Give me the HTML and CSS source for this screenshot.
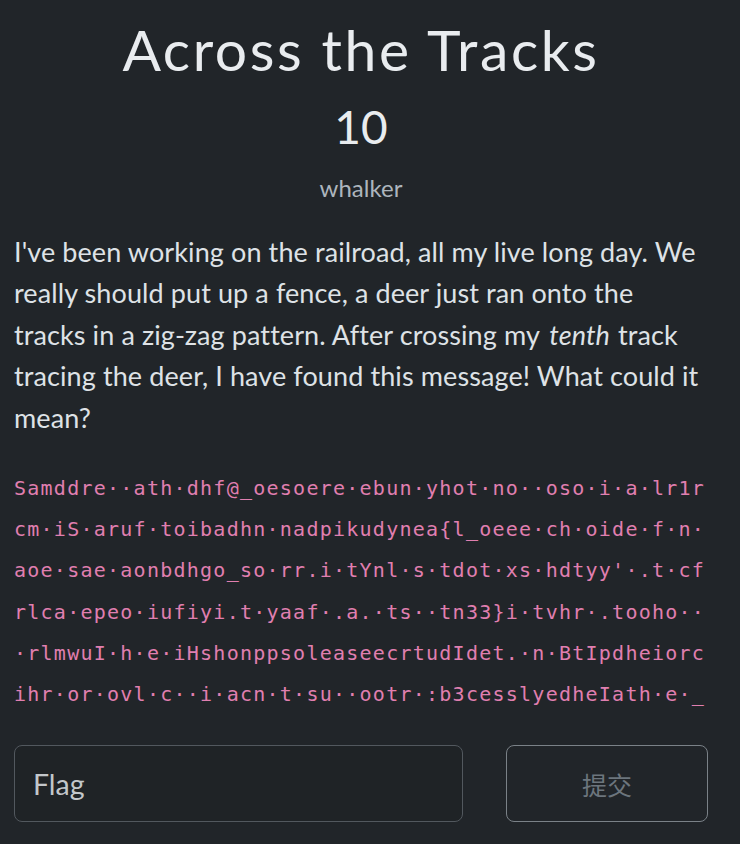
FILE: index.html
```html
<!DOCTYPE html>
<html lang="en">
<head>
<meta charset="utf-8">
<title>Across the Tracks</title>
<link rel="stylesheet" href="styles.css">
</head>
<body>
<main class="challenge">
  <h1 class="title">Across the Tracks</h1>
  <div class="points">10</div>
  <div class="author">whalker</div>
  <p class="desc">I've been working on the railroad, all my live long day. We really should put up a fence, a deer just ran onto the tracks in a zig-zag pattern. After crossing my <em>tenth</em> track tracing the deer, I have found this message! What could it mean?</p>
  <pre class="cipher">Samddre··ath·dhf@_oesoere·ebun·yhot·no··oso·i·a·lr1r
cm·iS·aruf·toibadhn·nadpikudynea{l_oeee·ch·oide·f·n·
aoe·sae·aonbdhgo_so·rr.i·tYnl·s·tdot·xs·hdtyy'·.t·cf
rlca·epeo·iufiyi.t·yaaf·.a.·ts··tn33}i·tvhr·.tooho··
·rlmwuI·h·e·iHshonppsoleaseecrtudIdet.·n·BtIpdheiorc
ihr·or·ovl·c··i·acn·t·su··ootr·:b3cesslyedheIath·e·_</pre>
  <form class="submit-row" onsubmit="return false">
    <input class="flag-input" type="text" placeholder="Flag">
    <button class="submit-btn" type="submit">提交</button>
  </form>
</main>
</body>
</html>
```
FILE: styles.css
```css
html, body {
  margin: 0;
  padding: 0;
  background: #212529;
}
body {
  font-family: Lato, "Noto Sans CJK SC", sans-serif;
  color: #dee2e6;
}
.challenge {
  padding: 15px 32px 0 14px;
}
.title {
  margin: 0;
  text-align: center;
  font-weight: 400;
  font-size: 57px;
  line-height: 1.2;
  color: #e9ecef;
  letter-spacing: 2.6px;
}
.points {
  margin-top: 16px;
  text-align: center;
  font-size: 46px;
  line-height: 1.2;
  color: #e9ecef;
}
.author {
  margin-top: 16px;
  text-align: center;
  font-size: 24px;
  line-height: 34px;
  color: #adb5bd;
}
.desc {
  margin: 26px 0 0;
  padding-right: 8px;
  font-size: 27px;
  letter-spacing: 0.1px;
  line-height: 41.5px;
  color: #dee2e6;
}
.desc em {
  font-style: italic;
  padding: 0 1px 0 3px;
}
.cipher {
  margin: 30px 0 0;
  font-family: "DejaVu Sans Mono", monospace;
  font-size: 20px;
  letter-spacing: 1.25px;
  line-height: 41.2px;
  color: #e07fb0;
  white-space: pre;
}
.submit-row {
  display: flex;
  gap: 43px;
  margin-top: 30px;
}
.flag-input {
  flex: 1;
  min-width: 0;
  height: 77px;
  box-sizing: border-box;
  padding: 0 18px;
  background: #1f2326;
  border: 1.5px solid #52585e;
  border-radius: 8px;
  font-family: Lato, sans-serif;
  font-size: 28.5px;
  color: #dee2e6;
  outline: none;
}
.flag-input::placeholder {
  color: #c3c7cb;
  opacity: 1;
}
.submit-btn {
  width: 202px;
  height: 77px;
  box-sizing: border-box;
  background: transparent;
  border: 1.5px solid #7a8187;
  border-radius: 8px;
  font-family: "Noto Sans CJK SC", sans-serif;
  font-size: 25px;
  color: #6c757d;
}
```
